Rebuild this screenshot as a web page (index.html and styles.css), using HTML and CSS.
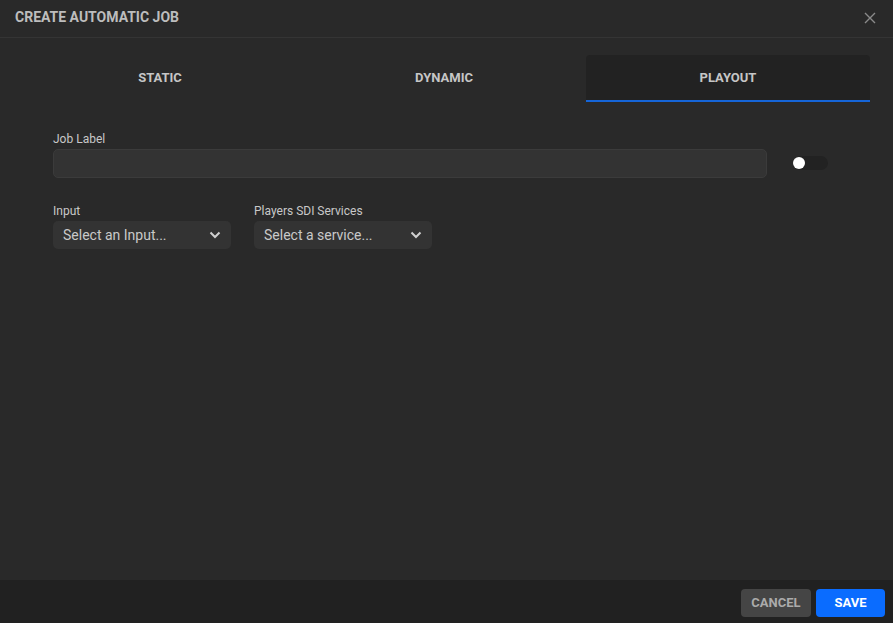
FILE: index.html
```html
<!DOCTYPE html>
<html>
<head>
<meta charset="utf-8">
<link rel="stylesheet" href="styles.css">
</head>
<body>
<div class="dialog">
  <header class="header">
    <h1 class="title">CREATE AUTOMATIC JOB</h1>
    <button class="close" aria-label="Close">
      <svg width="12" height="12" viewBox="0 0 12 12"><path d="M1 1L11 11M11 1L1 11" stroke="#8a8a8a" stroke-width="1.4" fill="none"/></svg>
    </button>
  </header>
  <main class="content">
    <nav class="tabs">
      <div class="tab">STATIC</div>
      <div class="tab">DYNAMIC</div>
      <div class="tab active">PLAYOUT</div>
    </nav>
    <div class="form">
      <div class="row-label">
        <div class="field grow">
          <label class="label">Job Label</label>
          <div class="input"></div>
        </div>
        <div class="toggle"><span class="knob"></span></div>
      </div>
      <div class="row-selects">
        <div class="field">
          <label class="label">Input</label>
          <div class="select"><span>Select an Input...</span>
            <svg width="12" height="8" viewBox="0 0 12 8"><path d="M1.5 1.5L6 6L10.5 1.5" stroke="#d0d0d0" stroke-width="2" fill="none"/></svg>
          </div>
        </div>
        <div class="field">
          <label class="label">Players SDI Services</label>
          <div class="select"><span>Select a service...</span>
            <svg width="12" height="8" viewBox="0 0 12 8"><path d="M1.5 1.5L6 6L10.5 1.5" stroke="#d0d0d0" stroke-width="2" fill="none"/></svg>
          </div>
        </div>
      </div>
    </div>
  </main>
  <footer class="footer">
    <button class="btn cancel">CANCEL</button>
    <button class="btn save">SAVE</button>
  </footer>
</div>
</body>
</html>
```
FILE: styles.css
```css
* { box-sizing: border-box; }
html, body { margin: 0; padding: 0; height: 100%; }
body {
  background: #292929;
  font-family: Roboto, "Liberation Sans", sans-serif;
  color: #c4c4c4;
}
.dialog {
  display: flex;
  flex-direction: column;
  height: 623px;
  width: 893px;
}
.header {
  height: 38px;
  border-bottom: 1px solid #343434;
  display: flex;
  align-items: center;
  justify-content: space-between;
  padding: 0 15px;
}
.title {
  margin: 0;
  font-size: 14px;
  font-weight: 700;
  color: #bdbdbd;
  padding-bottom: 3px;
}
.close {
  background: none;
  border: 0;
  padding: 0 0 2px 0;
  margin-right: 2px;
  display: flex;
}
.content {
  flex: 1;
  padding: 17px 23px 0 18px;
}
.tabs {
  display: flex;
  height: 47px;
}
.tab {
  flex: 1;
  display: flex;
  align-items: center;
  justify-content: center;
  font-size: 13px;
  font-weight: 700;
  color: #c6c6c6;
  padding-bottom: 2px;
}
.tab.active {
  background: #222222;
  border-radius: 4px 4px 0 0;
  border-bottom: 2px solid #1565d8;
  padding-bottom: 0;
}
.form {
  padding: 30px 0 0 35px;
}
.row-label {
  display: flex;
  align-items: flex-end;
}
.field {
  display: flex;
  flex-direction: column;
}
.grow { flex: 1; max-width: 714px; }
.label {
  font-size: 12px;
  color: #c8c8c8;
  margin-bottom: 3px;
  line-height: 14px;
}
.input {
  height: 29px;
  background: #333333;
  border: 1px solid #3b3b3b;
  border-radius: 5px;
}
.toggle {
  position: relative;
  width: 34px;
  height: 14px;
  margin: 0 0 8px 27px;
  background: #222222;
  border-radius: 7px;
}
.knob {
  position: absolute;
  left: -1px;
  top: 1px;
  width: 12px;
  height: 12px;
  border-radius: 50%;
  background: #ffffff;
}
.row-selects {
  display: flex;
  gap: 23px;
  margin-top: 26px;
}
.select {
  width: 178px;
  height: 28px;
  background: #333333;
  border-radius: 5px;
  display: flex;
  align-items: center;
  justify-content: space-between;
  padding: 0 10px;
  font-size: 14px;
  color: #c9c9c9;
}
.footer {
  height: 43px;
  background: #212121;
  display: flex;
  justify-content: flex-end;
  align-items: center;
  gap: 5px;
  padding: 2px 8px 0 0;
}
.btn {
  height: 28px;
  border: 0;
  border-radius: 4px;
  font-family: Roboto, "Liberation Sans", sans-serif;
  font-size: 13px;
  font-weight: 700;
  padding: 0;
}
.cancel {
  width: 70px;
  background: #454545;
  color: #ababab;
}
.save {
  width: 69px;
  background: #0a6cff;
  color: #ffffff;
}
```
